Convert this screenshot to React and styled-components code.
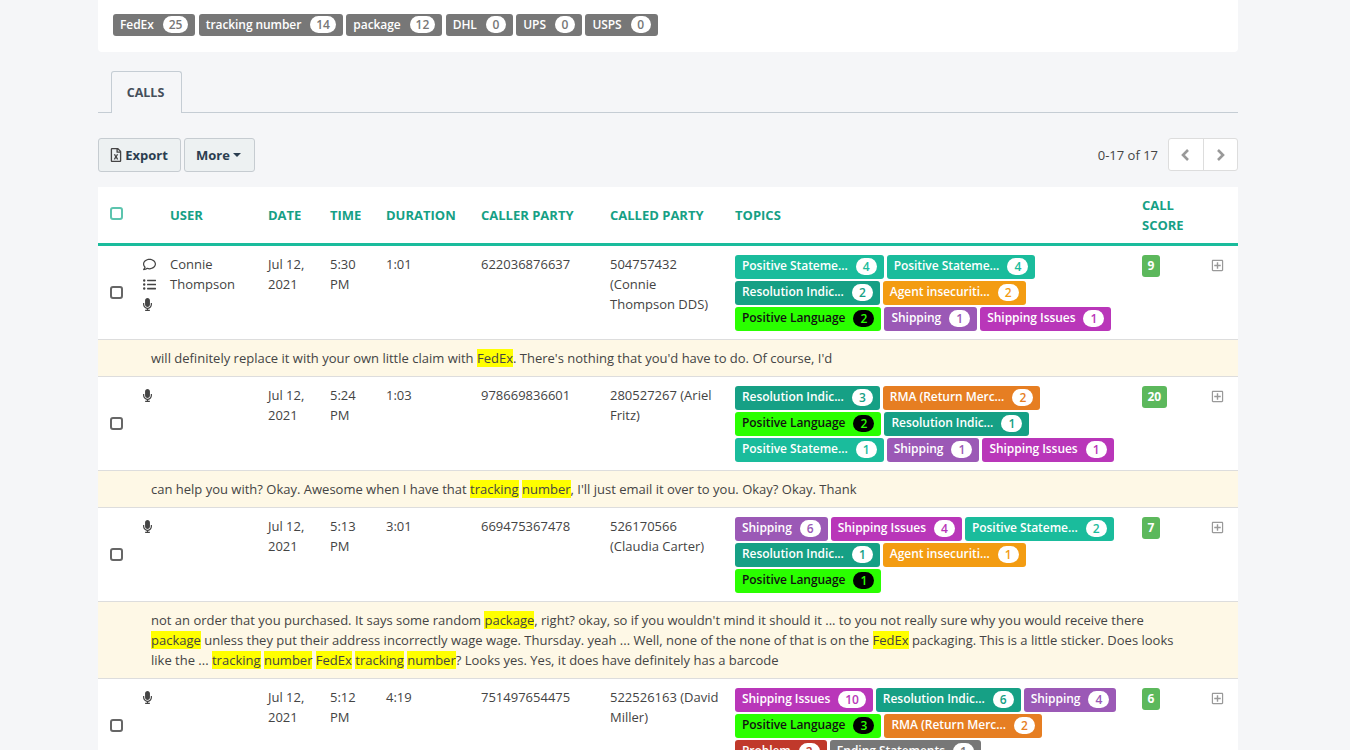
import React from "react";
import styled, { createGlobalStyle } from "styled-components";
import {
  FaRegComment,
  FaListUl,
  FaMicrophone,
  FaRegFileExcel,
  FaRegPlusSquare,
} from "react-icons/fa";

const GlobalStyle = createGlobalStyle`
  html, body {
    margin: 0;
    padding: 0;
    height: 750px;
    overflow: hidden;
    background: #f5f6f8;
    font-family: "Open Sans", "Liberation Sans", sans-serif;
    font-size: 13px;
    color: #444;
  }
`;

const Page = styled.div`
  width: 1140px;
  margin-left: 98px;
`;

const KeywordPanel = styled.div`
  display: flex;
  gap: 3.5px;
  height: 52px;
  box-sizing: border-box;
  padding: 14px 0 0 15px;
  background: #fff;
  border-radius: 0 0 4px 4px;
`;

const Keyword = styled.span`
  display: inline-flex;
  align-items: center;
  height: 22px;
  box-sizing: border-box;
  padding: 0 7px 1px;
  background: #777;
  color: #fff;
  border-radius: 3px;
  font-size: 12px;
  font-weight: 600;
  letter-spacing: -0.08px;
`;

const Count = styled.span`
  display: inline-block;
  min-width: ${(p) => (p.$pad ? 7 : 8)}px;
  padding: 0 ${(p) => p.$pad || 6}px;
  margin-left: ${(p) => p.$gap || 9}px;
  line-height: 17px;
  height: 17px;
  text-align: center;
  border-radius: 10px;
  font-size: 12px;
  font-weight: 600;
  background: ${(p) => p.$bg || "#fff"};
  color: ${(p) => p.$color || "#777"};
`;

const TabBar = styled.div`
  display: flex;
  height: 61px;
  box-sizing: border-box;
  padding: 19px 0 0 13px;
  border-bottom: 1px solid #c5cdd4;
`;

const Tab = styled.div`
  width: 71px;
  height: 42px;
  box-sizing: border-box;
  border: 1px solid #c5cdd4;
  border-bottom: none;
  border-radius: 3px 3px 0 0;
  background: #f5f6f8;
  font-size: 12.5px;
  font-weight: 700;
  color: #454f5b;
  text-align: center;
  line-height: 41px;
  padding-right: 2px;
`;

const Toolbar = styled.div`
  display: flex;
  align-items: center;
  height: 34px;
  margin: 25px 0 15px;
  gap: 3px;
`;

const ToolButton = styled.button`
  display: inline-flex;
  align-items: center;
  justify-content: center;
  gap: 2px;
  height: 34px;
  width: ${(p) => p.$width}px;
  padding: 0 2px 0 0;
  background: #edf1f2;
  border: 1px solid #c6ccd1;
  border-radius: 3px;
  color: #2b3e50;
  font-family: inherit;
  font-size: 13px;
  font-weight: 700;
  svg {
    font-size: 14px;
    color: #444;
  }
`;

const Caret = styled.span`
  display: inline-block;
  width: 0;
  height: 0;
  margin-left: 1px;
  border-top: 4px solid #2b3e50;
  border-left: 4px solid transparent;
  border-right: 4px solid transparent;
`;

const Pagination = styled.div`
  margin-left: auto;
  align-self: flex-start;
  display: flex;
  align-items: center;
  gap: 10px;
  font-size: 13px;
  color: #444;
`;

const PagerGroup = styled.div`
  display: flex;
  width: 70px;
  height: 33px;
  box-sizing: border-box;
  background: #fff;
  border: 1px solid #ddd;
  border-radius: 3px;
`;

const PagerButton = styled.div`
  flex: 1;
  display: flex;
  align-items: center;
  justify-content: center;
  & + & {
    border-left: 1px solid #ddd;
  }
`;

const Table = styled.div`
  background: #fff;
`;

const columns = "45px 27px 98px 62px 56px 95px 129px 125px 407px 69px 27px";

const HeadRow = styled.div`
  display: grid;
  grid-template-columns: ${columns};
  align-items: center;
  height: 59px;
  box-sizing: border-box;
  border-bottom: 3px solid #1abc9c;
  font-size: 13px;
  font-weight: 700;
  line-height: 20px;
  color: #16a085;
`;

const Check = styled.span`
  display: block;
  width: 13px;
  height: 13px;
  box-sizing: border-box;
  margin-left: 12px;
  border: 2px solid ${(p) => (p.$head ? "#5cc4ae" : "#666")};
  border-radius: 3px;
`;

const HeadCheck = styled(Check)`
  margin-top: -3px;
`;

const Row = styled.div`
  display: grid;
  grid-template-columns: ${columns};
  height: 93px;
  box-sizing: border-box;
  padding-top: 8px;
  line-height: 20px;
  overflow: hidden;
`;

const CheckCell = styled.div`
  display: flex;
  align-items: flex-start;
  padding-top: 32px;
`;

const IconCell = styled.div`
  display: flex;
  flex-direction: column;
`;

const IconSlot = styled.span`
  display: flex;
  align-items: center;
  height: 20px;
  margin-left: ${(p) => (p.$narrow ? -2 : 0)}px;
  color: #444;
  font-size: 13px;
`;

const Cell = styled.div`
  padding-right: 15px;
`;

const Topics = styled.div`
  display: flex;
  flex-wrap: wrap;
  align-content: flex-start;
  column-gap: 3px;
  row-gap: 2px;
  margin-top: 1px;
  padding-right: 15px;
`;

const Topic = styled.span`
  display: inline-flex;
  align-items: center;
  justify-content: space-between;
  height: 24px;
  box-sizing: border-box;
  padding: 0 7px 2px;
  border-radius: 3px;
  font-size: 12px;
  font-weight: 600;
  letter-spacing: -0.05px;
  background: ${(p) => p.$bg};
  color: ${(p) => p.$ink};
`;

const Score = styled.span`
  display: inline-block;
  padding: 0 5.5px;
  height: 22px;
  margin-top: 1px;
  line-height: 21px;
  text-align: center;
  background: #5cb85c;
  color: #fff;
  border-radius: 3px;
  font-size: 12px;
  font-weight: 700;
`;

const ExpandCell = styled.div`
  color: #999;
  font-size: 13px;
  svg {
    display: block;
    margin-top: 5px;
  }
`;

const Snippet = styled.div`
  background: #fef8e6;
  border-top: 1px solid #ddd;
  border-bottom: 1px solid #ddd;
  padding: 8px 55px 8px 53px;
  line-height: 20px;
  color: #444;
`;

const Mark = styled.mark`
  background: #ffff00;
  color: #444;
`;

const Chevron = ({ d }) => (
  <svg width="9" height="12" viewBox="0 0 9 12" fill="none" stroke="#999" strokeWidth="2.6">
    <path d={d} />
  </svg>
);

const kinds = {
  pos: ["#1abc9c", "#fff"],
  res: ["#16a085", "#fff"],
  ins: ["#f39c12", "#fff"],
  lang: ["#2aff00", "#111"],
  ship: ["#9b59b6", "#fff"],
  issue: ["#b936b9", "#fff"],
  rma: ["#e67e22", "#fff"],
  prob: ["#c0392b", "#fff"],
  end: ["#777", "#fff"],
};

const names = {
  pos: "Positive Stateme...",
  res: "Resolution Indic...",
  ins: "Agent insecuriti...",
  lang: "Positive Language",
  ship: "Shipping",
  issue: "Shipping Issues",
  rma: "RMA (Return Merc...",
  prob: "Problem",
  end: "Ending Statements",
};

const keywords = [
  ["FedEx", 25],
  ["tracking number", 14],
  ["package", 12],
  ["DHL", 0],
  ["UPS", 0],
  ["USPS", 0],
];

const calls = [
  {
    icons: true,
    user: "Connie Thompson",
    time: "5:30 PM",
    duration: "1:01",
    caller: "622036876637",
    called: "504757432 (Connie Thompson DDS)",
    score: 9,
    topics: [["pos", 4], ["pos", 4], ["res", 2], ["ins", 2], ["lang", 2], ["ship", 1], ["issue", 1]],
    snippet: (
      <>
        will definitely replace it with your own little claim with <Mark>FedEx</Mark>. There's nothing that you'd have to do. Of course, I'd
      </>
    ),
  },
  {
    time: "5:24 PM",
    duration: "1:03",
    caller: "978669836601",
    called: "280527267 (Ariel Fritz)",
    score: 20,
    topics: [["res", 3], ["rma", 2], ["lang", 2], ["res", 1], ["pos", 1], ["ship", 1], ["issue", 1]],
    snippet: (
      <>
        can help you with? Okay. Awesome when I have that <Mark>tracking</Mark> <Mark>number</Mark>, I'll just email it over to you. Okay? Okay. Thank
      </>
    ),
  },
  {
    time: "5:13 PM",
    duration: "3:01",
    caller: "669475367478",
    called: "526170566 (Claudia Carter)",
    score: 7,
    topics: [["ship", 6], ["issue", 4], ["pos", 2], ["res", 1], ["ins", 1], ["lang", 1]],
    snippet: (
      <>
        not an order that you purchased. It says some random <Mark>package</Mark>, right? okay, so if you wouldn't mind it should it ... to you not really sure why you would receive there <Mark>package</Mark> unless they put their address incorrectly wage wage. Thursday. yeah ... Well, none of the none of that is on the <Mark>FedEx</Mark> packaging. This is a little sticker. Does looks like the ... <Mark>tracking</Mark> <Mark>number</Mark> <Mark>FedEx</Mark> <Mark>tracking</Mark> <Mark>number</Mark>? Looks yes. Yes, it does have definitely has a barcode
      </>
    ),
  },
  {
    time: "5:12 PM",
    duration: "4:19",
    caller: "751497654475",
    called: "522526163 (David Miller)",
    score: 6,
    topics: [["issue", 10], ["res", 6], ["ship", 4], ["lang", 3], ["rma", 2], ["prob", 2], ["end", 1]],
  },
];

const App = () => {
  return (
    <Page>
      <GlobalStyle />
      <KeywordPanel>
        {keywords.map(([label, n]) => (
          <Keyword key={label}>
            {label}
            <Count>{n}</Count>
          </Keyword>
        ))}
      </KeywordPanel>
      <TabBar>
        <Tab>CALLS</Tab>
      </TabBar>
      <Toolbar>
        <ToolButton $width={83}>
          <FaRegFileExcel />
          Export
        </ToolButton>
        <ToolButton $width={71}>
          More
          <Caret />
        </ToolButton>
        <Pagination>
          0-17 of 17
          <PagerGroup>
            <PagerButton>
              <Chevron d="M7 1 L2 6 L7 11" />
            </PagerButton>
            <PagerButton>
              <Chevron d="M2 1 L7 6 L2 11" />
            </PagerButton>
          </PagerGroup>
        </Pagination>
      </Toolbar>
      <Table>
        <HeadRow>
          <HeadCheck $head />
          <span />
          <span>USER</span>
          <span>DATE</span>
          <span>TIME</span>
          <span>DURATION</span>
          <span>CALLER PARTY</span>
          <span>CALLED PARTY</span>
          <span>TOPICS</span>
          <span>
            CALL
            <br />
            SCORE
          </span>
          <span />
        </HeadRow>
        {calls.map((call) => (
          <React.Fragment key={call.caller}>
            <Row>
              <CheckCell>
                <Check />
              </CheckCell>
              <IconCell>
                {call.icons && (
                  <IconSlot>
                    <FaRegComment />
                  </IconSlot>
                )}
                {call.icons && (
                  <IconSlot>
                    <FaListUl />
                  </IconSlot>
                )}
                <IconSlot $narrow>
                  <FaMicrophone />
                </IconSlot>
              </IconCell>
              <Cell>{call.user}</Cell>
              <Cell>Jul 12, 2021</Cell>
              <Cell>{call.time}</Cell>
              <Cell>{call.duration}</Cell>
              <Cell>{call.caller}</Cell>
              <Cell>{call.called}</Cell>
              <Topics>
                {call.topics.map(([kind, n], i) => (
                  <Topic key={i} $bg={kinds[kind][0]} $ink={kinds[kind][1]}>
                    {names[kind]}
                    <Count
                      $gap={8}
                      $pad={7}
                      $bg={kind === "lang" ? "#000" : "#fff"}
                      $color={kind === "lang" ? kinds.lang[0] : kinds[kind][0]}
                    >
                      {n}
                    </Count>
                  </Topic>
                ))}
              </Topics>
              <div>
                <Score>{call.score}</Score>
              </div>
              <ExpandCell>
                <FaRegPlusSquare />
              </ExpandCell>
            </Row>
            {call.snippet && <Snippet>{call.snippet}</Snippet>}
          </React.Fragment>
        ))}
      </Table>
    </Page>
  );
};

export default App;
